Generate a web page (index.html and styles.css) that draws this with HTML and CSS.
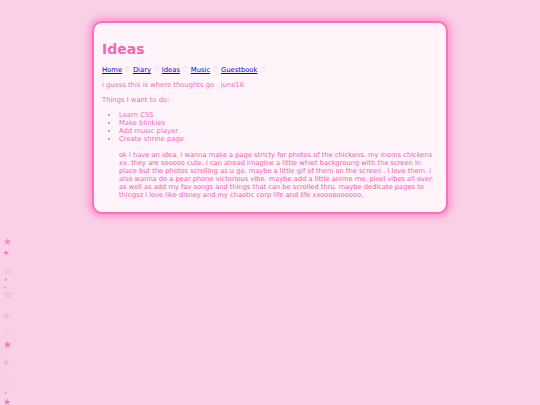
FILE: index.html
```html
<!DOCTYPE html>
<html>
<head>
<meta charset="utf-8">
<title>Ideas</title>
<link rel="stylesheet" href="styles.css">
</head>
<body>
<div class="box">
  <h1 class="title">Ideas</h1>
  <p class="nav"><a href="#">Home</a> <span class="heart">♡</span> <a href="#">Diary</a> <span class="heart">♡</span> <a href="#">Ideas</a> <span class="heart">♡</span> <a href="#">Music</a> <span class="heart">♡</span> <a href="#">Guestbook</a> <span class="heart">♡</span></p>
  <p>i guess this is where thoughts go . june16</p>
  <p>Things I want to do:</p>
  <ul class="todo">
    <li>Learn CSS</li>
    <li>Make blinkies</li>
    <li>Add music player</li>
    <li>Create shrine page</li>
    <p class="note">ok i have an idea, i wanna make a page stricty for photos of the chickens. my moms chickens xx. they are sooooo cute. i can alread imagine a little whiet backgroung with the screen in place but the photos scrolling as u go. maybe a little gif of them on the screen . i love them. i also wanna do a pear phone victorious vibe. maybe add a little anime me. pixel vibes all over. as well as add my fav songs and things that can be scrolled thru. maybe dedicate pages to thingsz i love like disney and my chaotic corp life and life xxoooooooooo.</p>
  </ul>
</div>
<div class="sparkles">
  <span class="sp s1">★</span>
  <span class="sp s2">★</span>
  <span class="sp s3">☆</span>
  <span class="sp s4">•</span>
  <span class="sp s5">☆</span>
  <span class="sp s6">✦</span>
  <span class="sp s7">♡</span>
  <span class="sp s8">✧</span>
  <span class="sp s9">♡</span>
  <span class="sp s10">★</span>
  <span class="sp s11">✧</span>
  <span class="sp s12">✧</span>
  <span class="sp s13">✧</span>
  <span class="sp s14">♡</span>
  <span class="sp s15">•</span>
  <span class="sp s16">★</span>
</div>
</body>
</html>
```

FILE: styles.css
```css
html, body {
  margin: 0;
  padding: 0;
}
body {
  background: #f9d0e8;
  font-family: "DejaVu Sans", Verdana, sans-serif;
  font-size: 6.8px;
  line-height: 8px;
  color: #ec6cb6;
  height: 405px;
  overflow: hidden;
  position: relative;
}
.box {
  width: 336px;
  margin: 21px auto 0;
  background: #fff4fa;
  border: 2px solid #ff70ba;
  border-radius: 10px;
  padding: 8px;
  box-shadow: 0 0 7px 3px #ff93cc;
}
.title {
  font-size: 14px;
  line-height: 16px;
  font-weight: bold;
  color: #f06aae;
  margin: 10px 0 9px;
}
p {
  margin: 7px 0;
}
.nav a {
  color: #0000ee;
}
.heart {
  color: #ee98c6;
  font-size: 7.2px;
}
.todo {
  margin: 6px 0 5px;
  padding-left: 17px;
}
.note {
  margin: 8px 0 0;
  font-size: 6.68px;
  color: #e663ad;
}
.sparkles {
  position: absolute;
  left: 0;
  top: 0;
}
.sp {
  position: absolute;
  line-height: 1;
  color: #f48cc4;
}
.s1 { left: 3px; top: 237px; font-size: 10px; color: #f58cc5; }
.s2 { left: 3px; top: 250px; font-size: 7px; color: #ea72b2; }
.s3 { left: 3px; top: 265px; font-size: 11px; color: #f5a6cf; }
.s4 { left: 4px; top: 277px; font-size: 7px; color: #f08cc2; }
.s5 { left: 3px; top: 289px; font-size: 11px; color: #f39ccb; }
.s6 { left: 3px; top: 286px; font-size: 4px; color: #f08cc2; }
.s7 { left: 4px; top: 300px; font-size: 6px; color: #f6b4d8; }
.s8 { left: 2px; top: 312px; font-size: 10px; color: #f39ccb; }
.s9 { left: 3px; top: 327px; font-size: 11px; color: #f6b8da; }
.s10 { left: 3px; top: 340px; font-size: 10px; color: #f07ab9; }
.s11 { left: 3px; top: 352px; font-size: 5px; color: #f6b4d6; }
.s12 { left: 2px; top: 358px; font-size: 10px; color: #f394c6; }
.s13 { left: 3px; top: 372px; font-size: 5px; color: #f6b4d6; }
.s14 { left: 3px; top: 379px; font-size: 11px; color: #f6b8da; }
.s15 { left: 4px; top: 390px; font-size: 6px; color: #f08cc2; }
.s16 { left: 3px; top: 398px; font-size: 9px; color: #f07ab9; }
```
